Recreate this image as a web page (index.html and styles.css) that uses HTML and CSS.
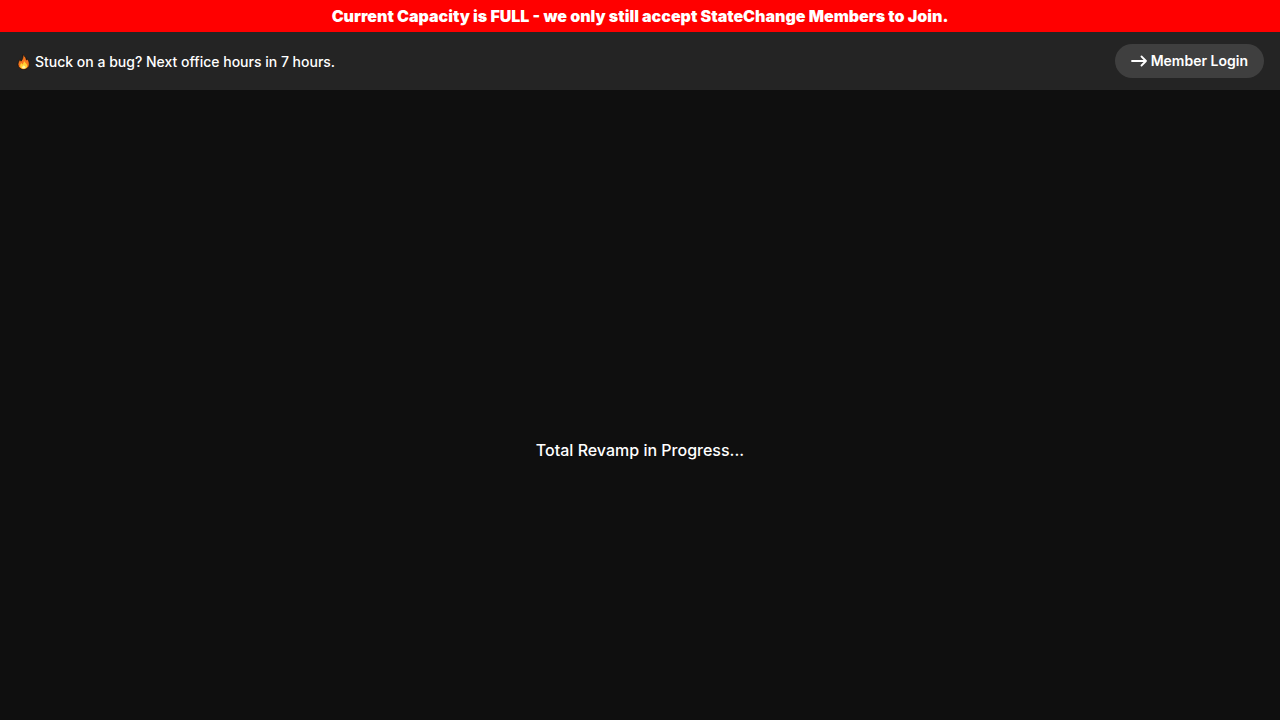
FILE: index.html
```html
<!DOCTYPE html>
<html lang="en">

<head>
    <meta charset="UTF-8">
    <meta name="viewport" content="width=device-width, initial-scale=1.0">
    <title>Office Hours</title>
    <link rel="stylesheet" href="styles.css">
</head>

<body>
    <div class="banner">Current Capacity is FULL - we only still accept StateChange Members to Join.</div>
    <header class="topbar">
        <p class="notice">
            <svg class="flame" viewBox="0 0 15 16" aria-hidden="true">
                <path fill="#f4761e" stroke="#0c0c0c" stroke-width=".7" d="M7 .6C9.500 2.500 10 4.500 10.500 6C11 5.800 11.200 5.300 11.200 4.800C12.700 6.500 13.300 8.500 13.300 10.200C13.300 13.500 10.500 15.400 7.700 15.400C4.500 15.400 2 13.300 2 10.300C2 8.200 3.200 7.200 3.700 5.500C4.500 6 4.800 6.500 5 7.200C6.500 5.500 7.300 3.500 7 .6Z"/>
                <path fill="#ffd234" d="M8 6.500C8.300 8.500 11.200 9.500 11.200 11.800C11.200 13.900 9.700 14.800 7.700 14.800C5.500 14.800 4.200 13.700 4.200 11.900C4.200 10.600 4.900 9.900 5.200 9C5.700 9.400 6 9.800 6.200 10.400C7.500 9.500 8 8.200 8 6.500Z"/>
                <path fill="#fff3a0" d="M7.800 11C8.500 12 9.500 12.300 9.500 13.300C9.500 14.300 8.700 14.600 7.700 14.600C6.700 14.600 6 14.200 6 13.300C6 12.400 7.500 12.200 7.800 11Z"/>
            </svg>
            <span>Stuck on a bug? Next office hours in 7 hours.</span>
        </p>
        <button class="login" type="button">
            <svg class="arrow" viewBox="0 0 16 12" aria-hidden="true">
                <path d="M1 6H15M10.500 1.500L15 6L10.500 10.500"/>
            </svg>
            <span>Member Login</span>
        </button>
    </header>
    <main class="content">
        <p>Total Revamp in Progress...</p>
    </main>
</body>

</html>
```

FILE: styles.css
```css
* {
    box-sizing: border-box;
}

body {
    margin: 0;
    min-height: 100vh;
    display: flex;
    flex-direction: column;
    background: #0f0f0f;
    color: #fff;
    font-family: Inter, "Liberation Sans", sans-serif;
    font-size: 16px;
    font-weight: 500;
    line-height: 24px;
}

p {
    margin: 0;
}

.banner {
    padding: 4px 16px;
    background: #f00;
    font-weight: 900;
    text-align: center;
}

.topbar {
    display: flex;
    justify-content: space-between;
    align-items: center;
    padding: 12px 16px;
    background: #242424;
    font-size: 14px;
}

.notice {
    display: flex;
    align-items: center;
    gap: 4px;
    padding-top: 2px;
}

.flame {
    width: 15px;
    height: 16px;
}

.login {
    display: flex;
    align-items: center;
    gap: 4px;
    padding: 5px 16px;
    border: 0;
    border-radius: 17px;
    background: #3f3f3f;
    color: #fff;
    font-family: inherit;
    font-size: 14px;
    font-weight: 600;
    line-height: 24px;
    cursor: pointer;
}

.arrow {
    width: 16px;
    height: 12px;
    fill: none;
    stroke: #fff;
    stroke-width: 1.8;
    stroke-linecap: round;
    stroke-linejoin: round;
}

.content {
    flex: 1;
    display: flex;
    justify-content: center;
    align-items: center;
    padding-top: 90px;
}
```
